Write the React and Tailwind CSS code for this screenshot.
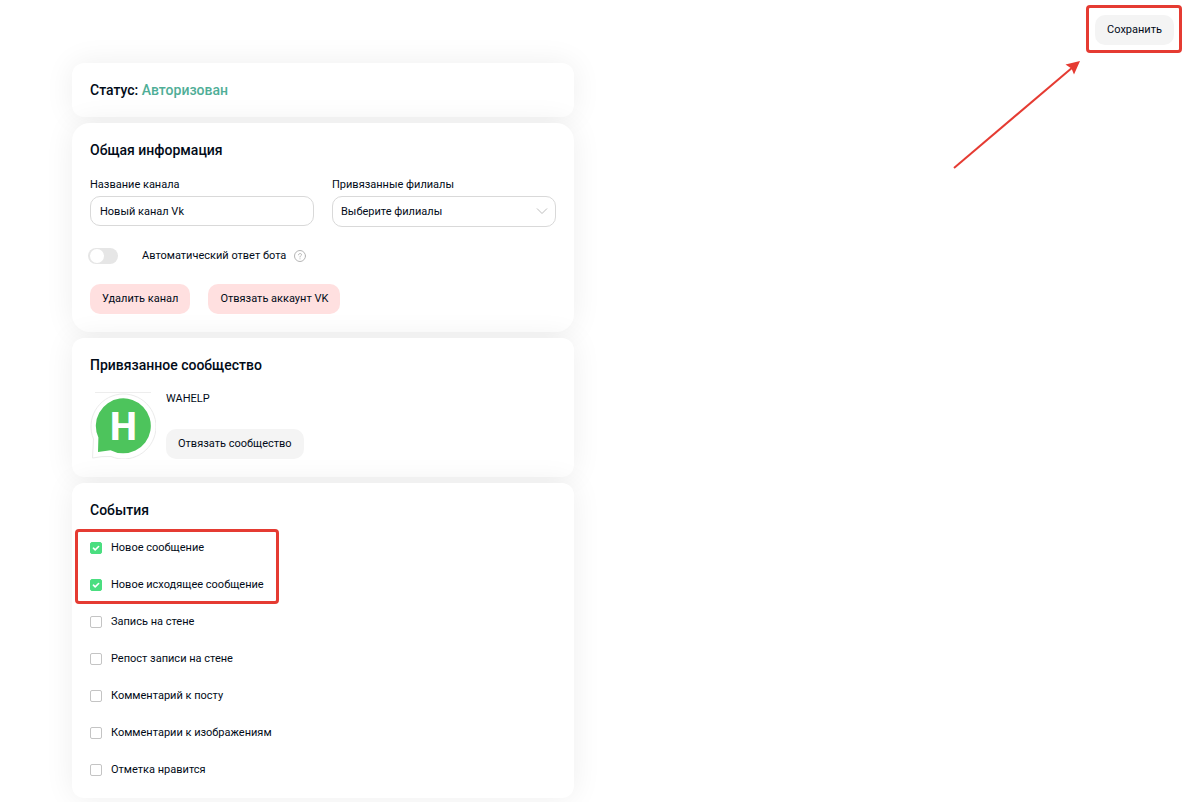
import { useState } from 'react';

const initialEvents = [
  { id: 'message_new', label: 'Новое сообщение', checked: true },
  { id: 'message_reply', label: 'Новое исходящее сообщение', checked: true },
  { id: 'wall_post_new', label: 'Запись на стене', checked: false },
  { id: 'wall_repost', label: 'Репост записи на стене', checked: false },
  { id: 'wall_reply_new', label: 'Комментарий к посту', checked: false },
  { id: 'photo_comment_new', label: 'Комментарии к изображениям', checked: false },
  { id: 'like_add', label: 'Отметка нравится', checked: false },
];

function Card({ title, className = '', children }) {
  return (
    <section className={`bg-white px-[18px] shadow-[0_0_30px_rgba(0,0,0,0.07)] ${className}`}>
      <h2 className="text-sm leading-5 font-medium">{title}</h2>
      {children}
    </section>
  );
}

function Button({ danger, children }) {
  return (
    <button
      type="button"
      className={`h-[30px] rounded-[10px] px-3 ${danger ? 'bg-[#ffe0e0]' : 'bg-[#f4f4f4]'}`}
    >
      {children}
    </button>
  );
}

function EventRow({ event, onToggle }) {
  return (
    <label htmlFor={event.id} className="flex h-[37px] items-center gap-[9px]">
      <span className="relative flex">
        <input
          id={event.id}
          type="checkbox"
          checked={event.checked}
          onChange={() => onToggle(event.id)}
          className="peer size-3 appearance-none rounded-[2px] border border-[#c4c4c4] bg-white checked:border-[#4ade80] checked:bg-[#4ade80]"
        />
        <svg
          viewBox="0 0 12 12"
          className="pointer-events-none absolute inset-0 hidden size-3 peer-checked:block"
          fill="none"
          stroke="#fff"
          strokeWidth="1.6"
          strokeLinecap="round"
          strokeLinejoin="round"
        >
          <path d="M3.4 6.2 5.2 7.9 8.6 4.5" />
        </svg>
      </span>
      {event.label}
    </label>
  );
}

function CommunityLogo() {
  return (
    <svg width="66" height="68" viewBox="0 0 66 68" role="img" aria-label="WAHELP">
      <path d="M5 1.5H61" stroke="#ededed" />
      <path
        d="M2.5 67 3.5 48A32.5 32.5 0 1 1 21 65.5Q12 65 2.5 67Z"
        fill="none"
        stroke="#ebebeb"
        strokeLinejoin="round"
      />
      <path d="M8 61 8.4 46.500A27.5 27.5 0 1 1 20.5 59.2Z" fill="#4dc45c" />
      <text
        x="33.5"
        y="48.5"
        textAnchor="middle"
        fill="#fff"
        className="text-[38px] font-extrabold"
      >
        H
      </text>
    </svg>
  );
}

export default function App() {
  const [name, setName] = useState('Новый канал Vk');
  const [autoReply, setAutoReply] = useState(false);
  const [events, setEvents] = useState(initialEvents);

  const toggleEvent = (id) => {
    setEvents(events.map((e) => (e.id === id ? { ...e, checked: !e.checked } : e)));
  };

  const renderRow = (event) => <EventRow key={event.id} event={event} onToggle={toggleEvent} />;

  return (
    <div className="bg-white pb-6 font-['Roboto',sans-serif] text-[11px] leading-4 text-[#020b18]">
      <header className="relative flex justify-end pt-[5px] pr-1 pb-[10px]">
        <div className="rounded-[4px] border-3 border-[#e53b32] pt-[7px] pr-[5px] pb-[5px] pl-[6px]">
          <Button>Сохранить</Button>
        </div>
        <svg
          width="130"
          height="110"
          viewBox="0 0 130 110"
          className="pointer-events-none absolute top-[60px] right-[104px]"
          aria-hidden="true"
        >
          <path d="M2 108 121 7" stroke="#e53b32" strokeWidth="2" />
          <path d="M128 1 113.5 4.5 119.5 8.5 122 14.5Z" fill="#e53b32" />
        </svg>
      </header>

      <main className="ml-[72px] flex max-w-[502px] flex-col gap-[6px]">
        <Card
          className="rounded-xl py-[17px]"
          title={
            <>
              Статус: <span className="text-[#4fae97]">Авторизован</span>
            </>
          }
        />

        <Card title="Общая информация" className="rounded-[18px] pt-[17px] pb-[18px]">
          <div className="mt-[17px] grid grid-cols-2 gap-[18px]">
            <div>
              <label htmlFor="name" className="block">
                Название канала
              </label>
              <input
                id="name"
                value={name}
                onChange={(e) => setName(e.target.value)}
                className="mt-[3px] block h-[30px] w-full rounded-[10px] border border-[#d9d9d9] px-[9px]"
              />
            </div>
            <div>
              <label htmlFor="branches" className="block">
                Привязанные филиалы
              </label>
              <div className="relative mt-[3px]">
                <select
                  id="branches"
                  className="block h-[31px] w-full appearance-none rounded-[10px] border border-[#d9d9d9] px-2"
                >
                  <option>Выберите филиалы</option>
                </select>
                <svg
                  width="12"
                  height="8"
                  viewBox="0 0 12 8"
                  className="pointer-events-none absolute top-[11px] right-2"
                  fill="none"
                  stroke="#bdbdbd"
                >
                  <path d="M1 1.5 6 6.5 11 1.5" />
                </svg>
              </div>
            </div>
          </div>

          <div className="mt-[21px] flex items-center">
            <input
              id="autoreply"
              type="checkbox"
              role="switch"
              checked={autoReply}
              onChange={(e) => setAutoReply(e.target.checked)}
              className="-ml-[2px] h-4 w-[30px] appearance-none rounded-full bg-[#e6e6e6] before:mt-px before:ml-[2px] before:block before:size-[14px] before:rounded-full before:bg-white checked:bg-[#4ade80] checked:before:ml-[14px]"
            />
            <label htmlFor="autoreply" className="ml-6">
              Автоматический ответ бота
            </label>
            <svg
              width="12"
              height="12"
              viewBox="0 0 12 12"
              className="ml-2"
              fill="none"
              stroke="#b5b5b5"
              strokeLinecap="round"
            >
              <circle cx="6" cy="6" r="5.5" />
              <path d="M4.5 4.8C4.5 3 7.5 3 7.5 4.7 7.5 5.7 6 5.7 6 7M6 8.8V8.9" />
            </svg>
          </div>

          <div className="mt-5 flex gap-[18px]">
            <Button danger>Удалить канал</Button>
            <Button danger>Отвязать аккаунт VK</Button>
          </div>
        </Card>

        <Card title="Привязанное сообщество" className="rounded-xl pt-[17px] pb-[18px]">
          <div className="mt-4 flex gap-[10px]">
            <CommunityLogo />
            <div className="flex flex-col items-start justify-between">
              <p>WAHELP</p>
              <Button>Отвязать сообщество</Button>
            </div>
          </div>
        </Card>

        <Card title="События" className="rounded-xl pt-[17px] pb-[10px]">
          <div className="relative mt-[9px]">
            <div className="pointer-events-none absolute top-0 -left-[15px] h-[75px] w-[204px] rounded-[4px] border-3 border-[#e53b32]" />
            {events.slice(0, 2).map(renderRow)}
          </div>
          {events.slice(2).map(renderRow)}
        </Card>
      </main>
    </div>
  );
}
